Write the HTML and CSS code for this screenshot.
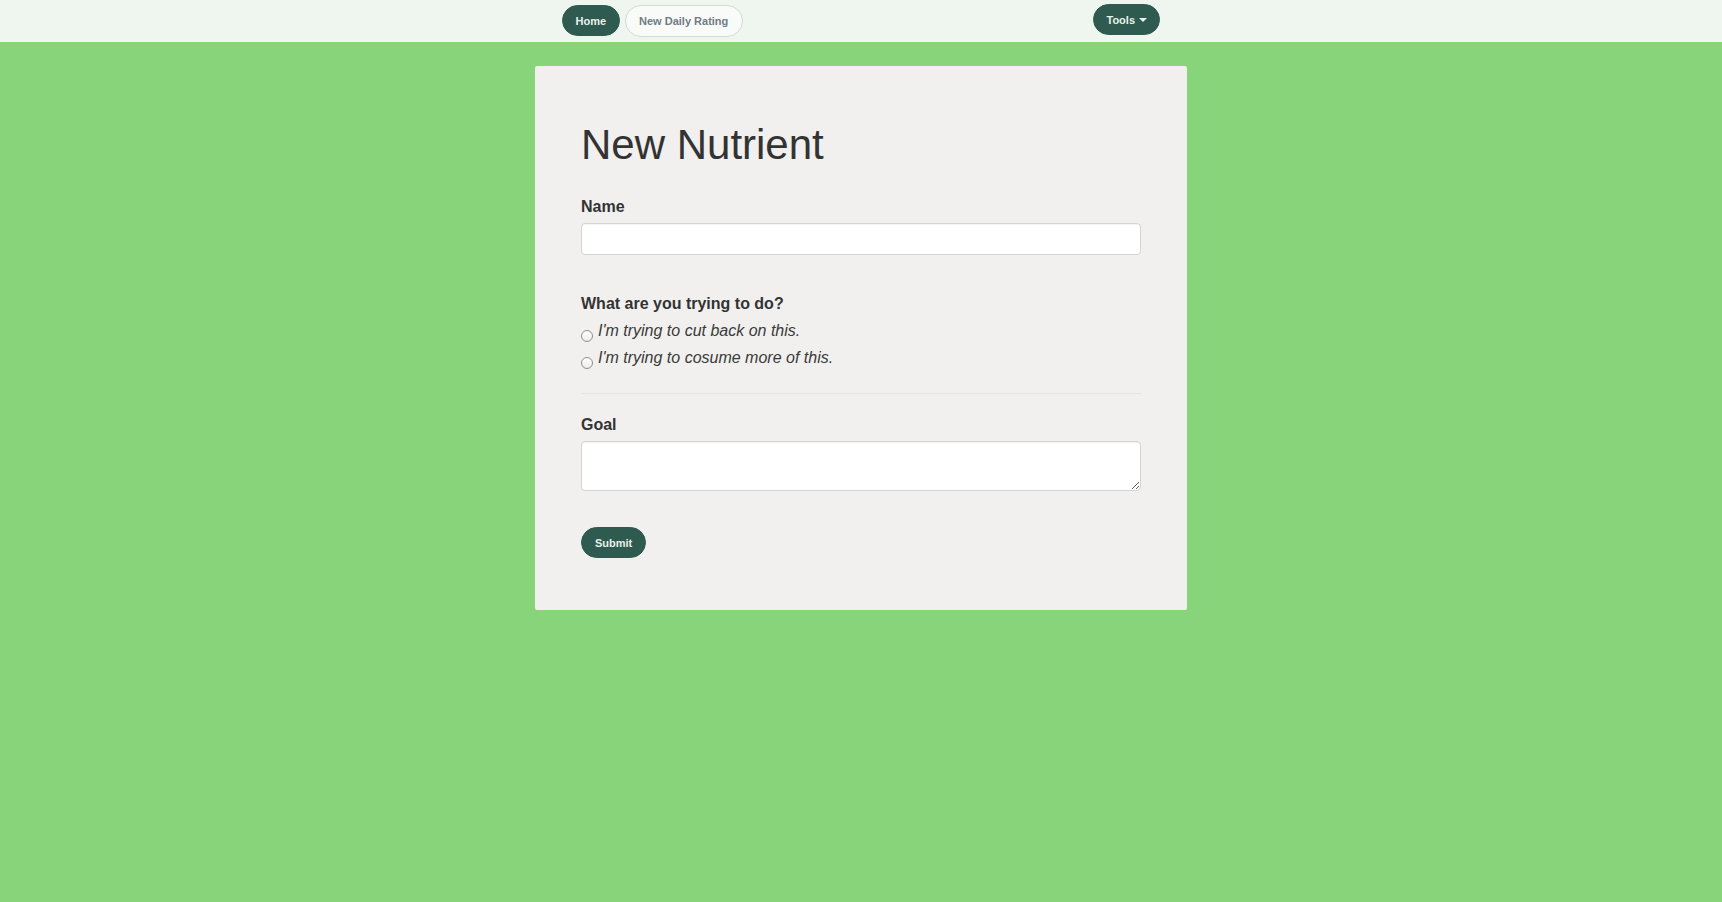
FILE: index.html
```html
<!DOCTYPE html>
<html lang="en">
<head>
<meta charset="utf-8">
<title>New Nutrient</title>
<link rel="stylesheet" href="styles.css">
</head>
<body>
<nav class="topbar">
  <div class="nav-inner">
    <div class="nav-left">
      <a class="pill pill-dark home" href="#">Home</a>
      <a class="pill pill-light" href="#">New Daily Rating</a>
    </div>
    <button class="pill pill-dark tools" type="button">Tools<span class="caret"></span></button>
  </div>
</nav>
<main class="card">
  <h1 class="title">New Nutrient</h1>
  <form class="form">
    <div class="field field-name">
      <label class="field-label" for="name">Name</label>
      <input class="text-input" id="name" type="text">
    </div>
    <div class="field field-choice">
      <div class="field-label">What are you trying to do?</div>
      <label class="radio-row first"><input class="radio" type="radio" name="dir"><span class="radio-text">I'm trying to cut back on this.</span></label>
      <label class="radio-row"><input class="radio" type="radio" name="dir"><span class="radio-text">I'm trying to cosume more of this.</span></label>
    </div>
    <hr class="divider">
    <div class="field field-goal">
      <label class="field-label" for="goal">Goal</label>
      <textarea class="text-area" id="goal"></textarea>
    </div>
    <button class="pill pill-dark submit" type="submit">Submit</button>
  </form>
</main>
</body>
</html>
```
FILE: styles.css
```css
* { box-sizing: border-box; }
html, body { margin: 0; padding: 0; }
body {
  background: #88d47a;
  font-family: "Liberation Sans", Arial, sans-serif;
  color: #333;
  min-height: 902px;
}
.topbar {
  height: 42px;
  background: #eff5ef;
}
.nav-inner {
  width: 598px;
  margin: 0 auto;
  display: flex;
  justify-content: space-between;
  align-items: flex-start;
}
.nav-left {
  display: flex;
  gap: 5px;
  padding-top: 5px;
}
.pill {
  display: inline-flex;
  align-items: center;
  height: 31px;
  padding: 0 13px;
  border-radius: 16px;
  font-family: "Liberation Sans", Arial, sans-serif;
  font-size: 11px;
  font-weight: bold;
  text-decoration: none;
  border: 1px solid transparent;
  cursor: pointer;
}
.pill-dark {
  background: #2e5a4f;
  color: #e9f1ec;
  border-color: #2e5a4f;
}
.home {
  padding: 0 12.5px;
}
.pill-light {
  background: #f8fbf8;
  color: #707c84;
  border-color: #d6dad6;
  height: 32px;
  padding: 0 13.5px;
}
.tools {
  margin-top: 4px;
  padding: 0 12px 0 12px;
}
.caret {
  display: inline-block;
  width: 0;
  height: 0;
  margin-left: 4px;
  margin-top: 1px;
  border-top: 4px solid #e9f1ec;
  border-left: 4px solid transparent;
  border-right: 4px solid transparent;
}
.card {
  width: 652px;
  margin: 24px auto 0;
  background: #f1f0ee;
  border-radius: 2px;
  padding: 55px 46px 52px;
}
.title {
  margin: 0;
  font-size: 42px;
  line-height: 48px;
  font-weight: normal;
  color: #333;
}
.form { margin: 0; }
.field-label {
  display: block;
  font-size: 16px;
  line-height: 20px;
  font-weight: bold;
  color: #333;
}
.field-name { margin-top: 28px; }
.text-input {
  display: block;
  width: 100%;
  height: 32px;
  margin-top: 6px;
  background: #fff;
  border: 1px solid #d4d4d4;
  border-radius: 4px;
  box-shadow: inset 0 1px 1px rgba(0,0,0,0.05);
  font-size: 14px;
  padding: 4px 10px;
  outline: none;
}
.field-choice { margin-top: 39px; }
.radio-row {
  display: flex;
  align-items: flex-start;
  height: 22px;
  margin-top: 5px;
  font-size: 16px;
  line-height: 22px;
  font-style: italic;
  color: #3a3a3a;
}
.radio-row.first { margin-top: 6px; }
.radio {
  -webkit-appearance: none;
  appearance: none;
  width: 12px;
  height: 12px;
  margin: 10px 5px 0 0;
  border: 1px solid #8f8f8f;
  border-radius: 50%;
  background: linear-gradient(#fff, #ececec);
  flex: none;
}
.divider {
  margin: 24px 0 0;
  border: 0;
  border-top: 1px solid #e6e4e2;
  height: 0;
}
.field-goal { margin-top: 21px; }
.text-area {
  display: block;
  width: 100%;
  height: 50px;
  margin-top: 6px;
  background: #fff;
  border: 1px solid #d4d4d4;
  border-radius: 4px;
  box-shadow: inset 0 1px 1px rgba(0,0,0,0.05);
  resize: vertical;
  font-size: 14px;
  padding: 6px 10px;
  outline: none;
}
.submit {
  margin-top: 36px;
  padding: 0 13px;
  height: 31px;
}
```
